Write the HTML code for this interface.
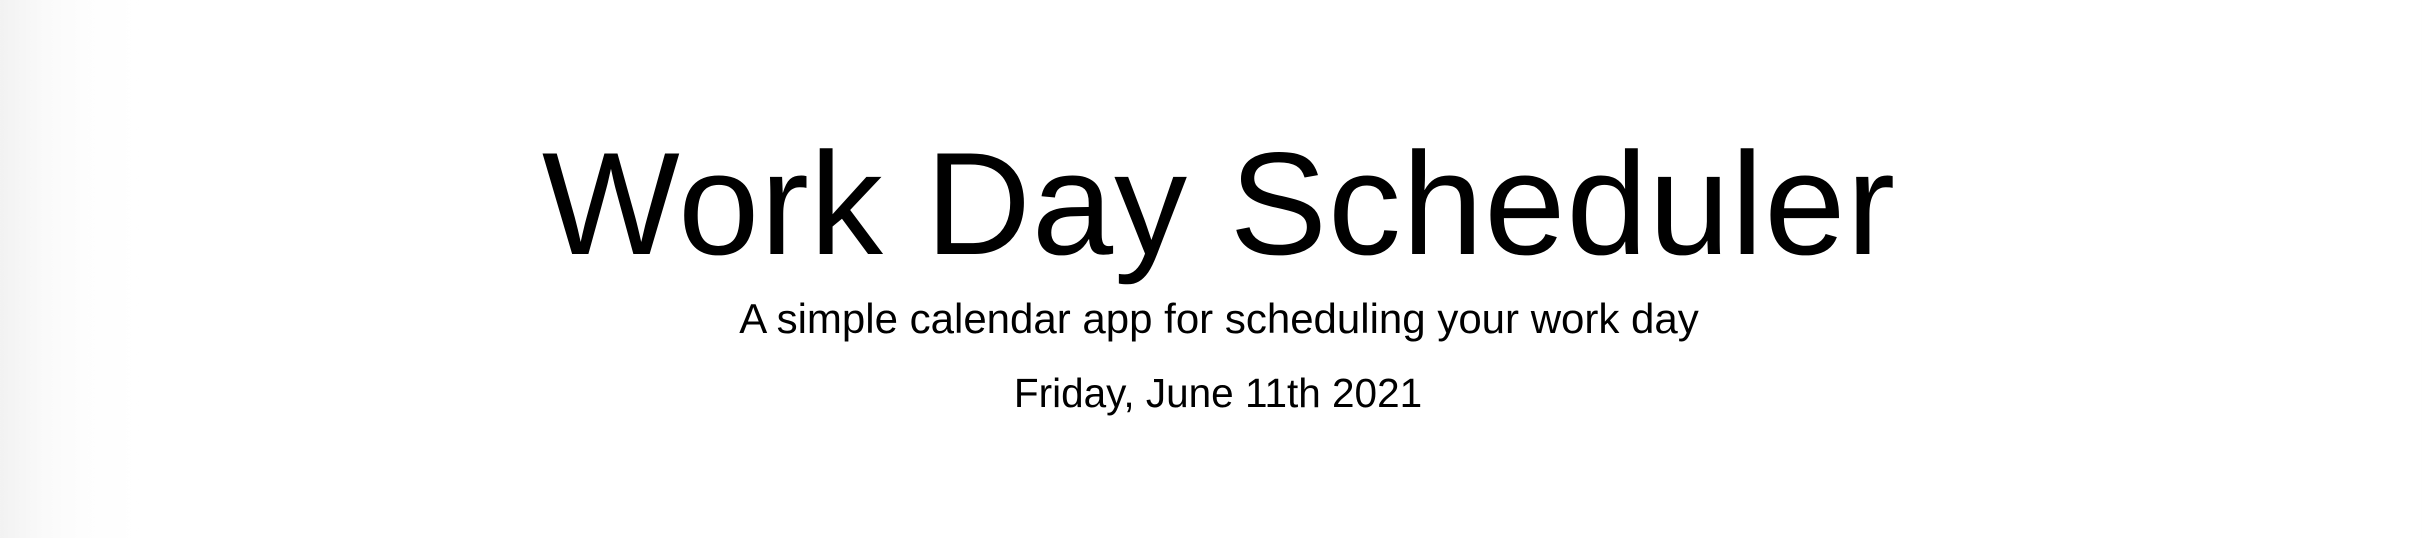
<!DOCTYPE html>
<html><head><meta charset="utf-8"><style>
html,body{margin:0;padding:0}
body{width:2422px;height:538px;overflow:hidden;position:relative;background:linear-gradient(to right,#f2f2f2 0px,#fafafa 45px,#fdfdfd 80px,#fff 140px);font-family:"Liberation Sans",sans-serif;color:#000}
div{position:absolute;left:0;width:2422px;text-align:center;white-space:nowrap}
.t{top:131px;left:8px;font-size:146px;line-height:146px;letter-spacing:1px}
.s{top:298px;left:8px;font-size:42px;line-height:42px}
.d{top:373px;left:7px;font-size:40.5px;line-height:40.5px}
</style></head><body>
<div class="t">Work Day Scheduler</div>
<div class="s">A simple calendar app for scheduling your work day</div>
<div class="d">Friday, June 11th 2021</div>
</body></html>
